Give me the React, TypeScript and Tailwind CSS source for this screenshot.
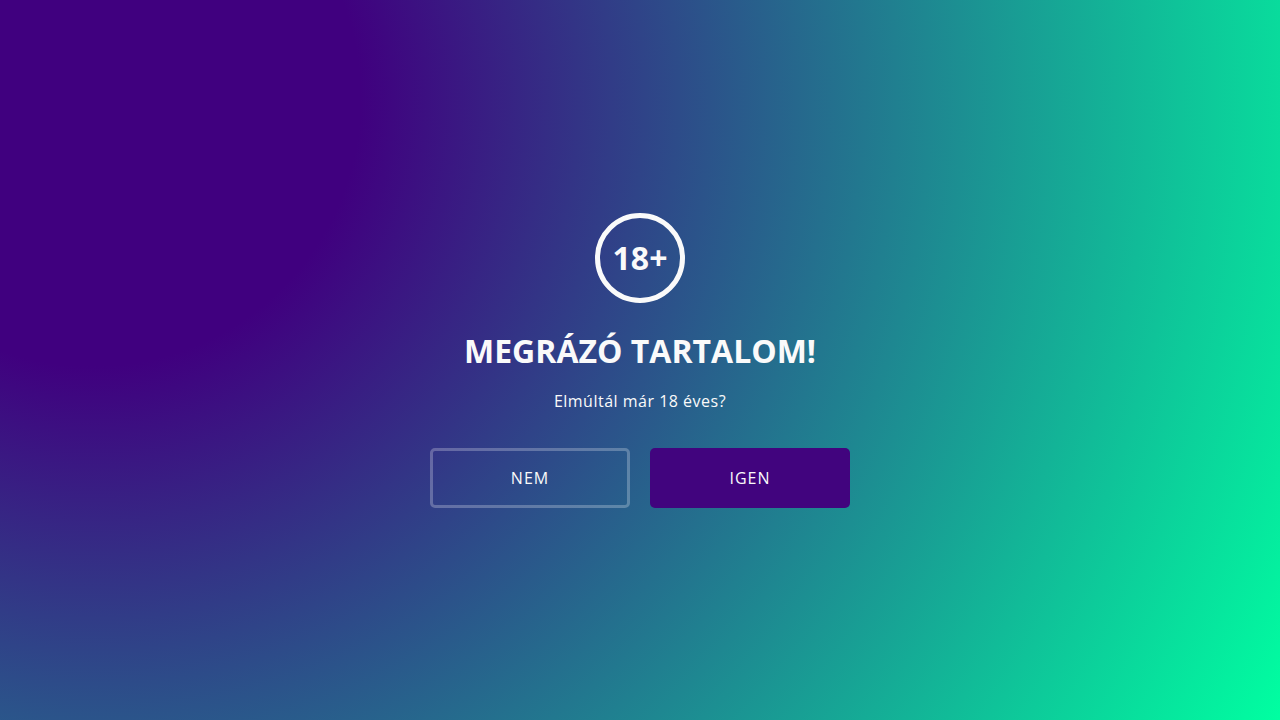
const actions = [
    {
        label: "Nem",
        style: "border-3 border-white/25"
    },
    {
        label: "Igen",
        style: "bg-[#41047e]"
    }
];

const App = () => {
    return (
        <main className="min-h-screen flex flex-col items-center justify-center px-4 text-center text-[#fafafa] font-['Open_Sans',sans-serif] bg-[radial-gradient(circle_farthest-corner_at_7.2%_13.6%,#40007f_20%,#00ffa1_100%)]">
            <div className="w-[90px] h-[90px] rounded-full border-5 border-[#fafafa] flex items-center justify-center text-[32px] font-bold">
                18+
            </div>
            <h1 className="mt-6 text-[32px] leading-12 font-bold uppercase">
                Megrázó tartalom!
            </h1>
            <p className="mt-[14px] text-base leading-6 tracking-[0.5px]">
                Elmúltál már 18 éves?
            </p>
            <div className="mt-[35px] flex flex-wrap justify-center gap-5">
                {actions.map((action) => (
                    <button
                        key={action.label}
                        type="button"
                        className={`w-[200px] h-[60px] rounded-[5px] text-base uppercase tracking-[1px] cursor-pointer ${action.style}`}
                    >
                        {action.label}
                    </button>
                ))}
            </div>
        </main>
    );
};

export default App;
